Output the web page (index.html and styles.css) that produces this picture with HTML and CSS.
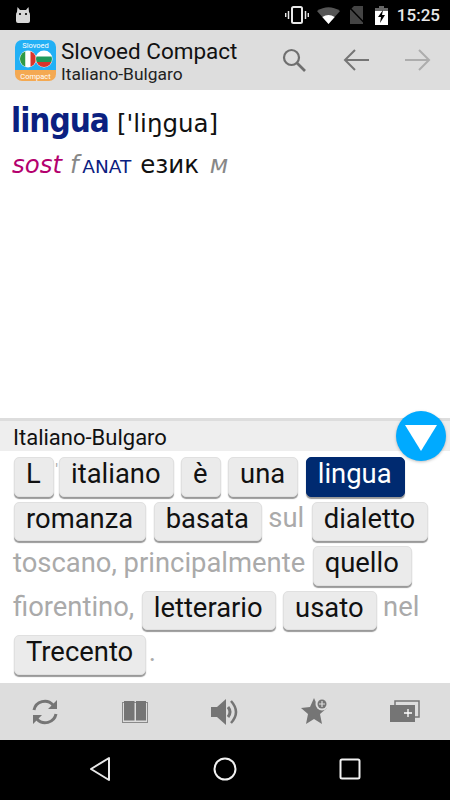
FILE: index.html
```html
<!DOCTYPE html>
<html>
<head>
    <title>Slovoed Compact</title>
    <link rel="stylesheet" href="styles.css">
</head>
<body>
    <div id="app">
        <div class="status-bar">
            <svg class="droid" width="16" height="16" viewBox="0 0 16 16">
                <path d="M2.5 0 L5 3 H11 L13.500 0 L14 5 Q15 6 15 8 V14 Q15 16 13 16 H3 Q1 16 1 14 V8 Q1 6 2 5 Z" fill="#d8d8d8"/>
                <circle cx="5" cy="7" r="1.100" fill="#000"/>
                <circle cx="11" cy="7" r="1.100" fill="#000"/>
            </svg>
            <div class="status-right">
                <svg class="st-vibrate" width="24" height="18" viewBox="0 0 24 18" fill="none" stroke="#e8e8e8">
                    <rect x="7" y="1" width="10" height="16" rx="1.500" stroke-width="2"/>
                    <path d="M3.500 5 V13 M20.500 5 V13" stroke-width="1.500"/>
                    <path d="M0.700 7 V11 M23.300 7 V11" stroke-width="1.400"/>
                </svg>
                <svg class="st-wifi" width="23" height="17" viewBox="0 0 23 17">
                    <path d="M0 4 Q11.500 -3.500 23 4 L11.500 17 Z" fill="#555"/>
                    <path d="M5.300 10 Q11.500 6 17.700 10 L11.500 17 Z" fill="#fff"/>
                </svg>
                <svg class="st-sim" width="16" height="18" viewBox="0 0 16 18">
                    <path d="M5 0 H14 V18 H1 V4 Z" fill="#444"/>
                    <path d="M0 1 L16 17.500" stroke="#000" stroke-width="1.500"/>
                </svg>
                <svg class="st-batt" width="13" height="19" viewBox="0 0 13 19">
                    <path d="M4 0 H9 V2 H13 V19 H0 V2 H4 Z" fill="#fff"/>
                    <path d="M4 0 H9 V2 H13 V5 H0 V2 H4 Z" fill="#666"/>
                    <path d="M8 4 L3 11 H6 L5 17 L10 9 H7 Z" fill="#000"/>
                </svg>
                <span class="clock">15:25</span>
            </div>
        </div>

        <div class="app-header">
            <svg class="app-icon" width="41" height="41" viewBox="0 0 41 41">
                <defs>
                    <clipPath id="clipIt"><circle cx="13" cy="19" r="8"/></clipPath>
                    <clipPath id="clipBg"><circle cx="29" cy="19" r="8"/></clipPath>
                    <clipPath id="clipIcon"><rect width="41" height="41" rx="7"/></clipPath>
                </defs>
                <g clip-path="url(#clipIcon)">
                    <rect width="41" height="31" fill="#22b0f5"/>
                    <rect y="30" width="41" height="11" fill="#f4a952"/>
                </g>
                <circle cx="13" cy="19" r="8.500" fill="#fff"/>
                <g clip-path="url(#clipIt)">
                    <rect x="5" y="10" width="5.500" height="18" fill="#2f9a45"/>
                    <rect x="10.500" y="10" width="5" height="18" fill="#fff"/>
                    <rect x="15.500" y="10" width="5.500" height="18" fill="#d9342b"/>
                </g>
                <circle cx="29" cy="19" r="8.500" fill="#fff"/>
                <g clip-path="url(#clipBg)">
                    <rect x="21" y="10" width="16" height="6.500" fill="#fff"/>
                    <rect x="21" y="16.500" width="16" height="5.500" fill="#1f9a5c"/>
                    <rect x="21" y="22" width="16" height="6" fill="#d9342b"/>
                </g>
                <text x="20.500" y="8" class="icon-label">Slovoed</text>
                <text x="20.500" y="38.500" class="icon-label">Compact</text>
            </svg>
            <div class="app-titles">
                <div class="app-title">Slovoed Compact</div>
                <div class="app-sub">Italiano-Bulgaro</div>
            </div>
            <div class="app-actions">
                <div class="action">
                    <svg width="26" height="26" viewBox="0 0 26 26" fill="none" stroke="#6f6f6f" stroke-width="2.200">
                        <circle cx="10.500" cy="10.500" r="7.500"/>
                        <path d="M16 16 L24 24" stroke-width="2.600"/>
                    </svg>
                </div>
                <div class="action">
                    <svg width="26" height="22" viewBox="0 0 26 22" fill="none" stroke="#757575" stroke-width="2">
                        <path d="M26 11 H2 M12 1 L2 11 L12 21"/>
                    </svg>
                </div>
                <div class="action">
                    <svg width="26" height="22" viewBox="0 0 26 22" fill="none" stroke="#adadad" stroke-width="2">
                        <path d="M0 11 H24 M14 1 L24 11 L14 21"/>
                    </svg>
                </div>
            </div>
        </div>

        <div class="entry">
            <div class="entry-head"><span class="headword">lingua</span> <span class="phon">['liŋgua]</span></div>
            <div class="entry-line"><span class="pos">sost</span> <span class="gender">f</span> <span class="label">ANAT</span> <span class="trans">език</span> <span class="gender gender-end">м</span></div>
        </div>

        <div class="panel">
            <div class="panel-title">Italiano-Bulgaro</div>
            <button class="fab">
                <svg width="32" height="26" viewBox="0 0 32 26"><path d="M0 0 H32 L16 26 Z" fill="#fff"/></svg>
            </button>
            <div class="tokens">
                <span class="tok">L</span>
                <span class="apos">'</span>
                <span class="tok">italiano</span>
                <span class="tok">è</span>
                <span class="tok">una</span>
                <span class="tok tok-on">lingua</span>
                <span class="tok">romanza</span>
                <span class="tok">basata</span>
                <span class="plain">sul</span>
                <span class="tok">dialetto</span>
                <span class="plain">toscano, principalmente</span>
                <span class="tok">quello</span>
                <span class="plain">fiorentino,</span>
                <span class="tok">letterario</span>
                <span class="tok">usato</span>
                <span class="plain">nel</span>
                <span class="tok">Trecento</span>
                <span class="plain dot">.</span>
            </div>
        </div>

        <div class="toolbar">
            <div class="tool">
                <svg width="30" height="28" viewBox="0 0 30 28" fill="none" stroke="#757575" stroke-width="3">
                    <path d="M4 12 A11 11 0 0 1 23 7"/>
                    <path d="M26 16 A11 11 0 0 1 7 21"/>
                    <path d="M27 2 V11 H18 Z M3 26 V17 H12 Z" fill="#757575" stroke="none"/>
                </svg>
            </div>
            <div class="tool">
                <svg width="26" height="22" viewBox="0 0 26 22">
                    <rect x="0.500" y="1.500" width="25" height="20" fill="none" stroke="#8a8a8a"/>
                    <rect x="2" y="0" width="10.500" height="19.500" fill="#757575"/>
                    <rect x="14" y="0" width="10" height="19.500" fill="#757575"/>
                </svg>
            </div>
            <div class="tool">
                <svg width="28" height="28" viewBox="0 0 28 28" fill="none">
                    <path d="M0 9 H6 L15 1 V27 L6 19 H0 Z" fill="#757575"/>
                    <path d="M17 9 Q21 14 17 19" stroke="#757575" stroke-width="3"/>
                    <path d="M20 3 Q30 14 20 25" stroke="#757575" stroke-width="2.500"/>
                </svg>
            </div>
            <div class="tool">
                <svg width="28" height="27" viewBox="0 0 28 27">
                    <path d="M13 0 L17 9 L26 10 L19 16 L21 26 L13 21 L5 26 L7 16 L0 10 L9 9 Z" fill="#757575"/>
                    <circle cx="21" cy="6" r="6.500" fill="#ddd"/>
                    <circle cx="21" cy="6" r="4.500" fill="#757575"/>
                    <path d="M18 6 H24 M21 3 V9" stroke="#ddd" stroke-width="1.200"/>
                </svg>
            </div>
            <div class="tool">
                <svg width="30" height="23" viewBox="0 0 30 23">
                    <path d="M5 5 V1 H29 V17 H25" fill="none" stroke="#757575" stroke-width="1.500"/>
                    <rect x="0" y="5" width="25" height="17" fill="#757575"/>
                    <path d="M14 13 H22 M18 9 V17" stroke="#fff" stroke-width="1.300"/>
                </svg>
            </div>
        </div>

        <div class="nav-bar">
            <svg width="22" height="26" viewBox="0 0 22 26" fill="none" stroke="#e8e8e8" stroke-width="2" stroke-linejoin="round">
                <path d="M20 2 V24 L2 13 Z"/>
            </svg>
            <svg width="24" height="24" viewBox="0 0 24 24" fill="none" stroke="#f2f2f2" stroke-width="2">
                <circle cx="12" cy="12" r="10.500"/>
            </svg>
            <svg width="22" height="22" viewBox="0 0 22 22" fill="none" stroke="#f2f2f2" stroke-width="2">
                <rect x="1.500" y="1.500" width="19" height="19" rx="1.500"/>
            </svg>
        </div>
    </div>
</body>
</html>
```

FILE: styles.css
```css
* {
  box-sizing: border-box;
}

body {
  margin: 0;
  font-family: Roboto, sans-serif;
  background: #fff;
}

#app {
  width: 450px;
  height: 800px;
  display: flex;
  flex-direction: column;
  overflow: hidden;
}

.status-bar {
  height: 30px;
  background: #000;
  display: flex;
  align-items: center;
  justify-content: space-between;
  padding: 0 10px 0 15px;
}

.status-right {
  display: flex;
  align-items: center;
}

.st-vibrate {
  margin-right: 8px;
}

.st-wifi {
  margin-right: 9px;
}

.st-sim {
  margin-right: 10px;
}

.st-batt {
  margin-right: 9px;
}

.clock {
  color: #e8e8e8;
  font-size: 17px;
  font-weight: 500;
}

.app-header {
  height: 60px;
  background: #ddd;
  display: flex;
  align-items: center;
  padding-left: 15px;
}

.app-icon {
  flex: none;
}

.icon-label {
  fill: #fff;
  font-size: 7.5px;
  text-anchor: middle;
}

.app-titles {
  flex: 1;
  margin-left: 5px;
  padding-top: 2px;
}

.app-title {
  font-size: 22.5px;
  line-height: 25px;
  color: #111;
}

.app-sub {
  font-size: 17.4px;
  line-height: 20px;
  color: #222;
}

.app-actions {
  display: flex;
  margin-right: 1px;
}

.action {
  width: 62px;
  display: flex;
  justify-content: center;
  align-items: center;
}

.entry {
  flex: 1;
  padding: 9px 12px 0 11px;
  font-family: "DejaVu Sans", sans-serif;
}

.entry-head {
  height: 44px;
  line-height: 44px;
}

.headword {
  font-size: 33px;
  font-weight: bold;
  font-stretch: condensed;
  letter-spacing: -1px;
  color: #0b2080;
}

.phon {
  font-size: 24.5px;
  color: #111;
  margin-left: 3px;
}

.entry-line {
  font-size: 24.5px;
  line-height: 30px;
  margin-top: 7px;
  padding-left: 1px;
}

.pos {
  font-style: italic;
  color: #b4006e;
}

.gender {
  font-style: italic;
  color: #888;
}

.gender-end {
  margin-left: 3px;
}

.label {
  font-size: 18.5px;
  color: #0b2080;
  margin-left: -4px;
}

.trans {
  color: #111;
  margin-left: 1px;
}

.panel {
  position: relative;
  height: 265px;
  border-top: 3px solid #ddd;
}

.panel-title {
  height: 30px;
  background: #eee;
  font-size: 22px;
  line-height: 33px;
  padding-left: 13px;
  color: #111;
}

.fab {
  position: absolute;
  top: -10px;
  right: 4px;
  width: 50px;
  height: 50px;
  border: 0;
  border-radius: 50%;
  padding: 4px 0 0;
  background: #00aaff;
  box-shadow: 0 1px 3px #00000040;
  display: flex;
  align-items: center;
  justify-content: center;
}

.tokens {
  display: flex;
  flex-wrap: wrap;
  align-items: center;
  column-gap: 6.5px;
  row-gap: 5px;
  padding: 6px 14px 0 13px;
  font-size: 27.4px;
}

.tok {
  height: 39.5px;
  line-height: 33px;
  margin-left: 1px;
  padding: 0 12px 0 11px;
  color: #111;
  background: #ebebeb;
  border: 1px solid #e0e0e0;
  border-radius: 5px;
  box-shadow: 0 2px 1px #999;
}

.tok-on {
  color: #fff;
  background: #002a70;
  border-color: #002a70;
}

.plain {
  color: #aaa;
  margin-top: -6px;
}

.apos {
  color: #aaa;
  font-size: 16px;
  margin: -14px -6.5px 0 -5px;
}

.dot {
  margin-left: -4px;
}

.toolbar {
  height: 57px;
  background: #ddd;
  display: flex;
  align-items: center;
}

.tool {
  width: 90px;
  display: flex;
  justify-content: center;
  align-items: center;
}

.nav-bar {
  height: 60px;
  background: #000;
  display: flex;
  align-items: center;
  justify-content: space-between;
  padding: 0 89px 3px 89px;
}
```
